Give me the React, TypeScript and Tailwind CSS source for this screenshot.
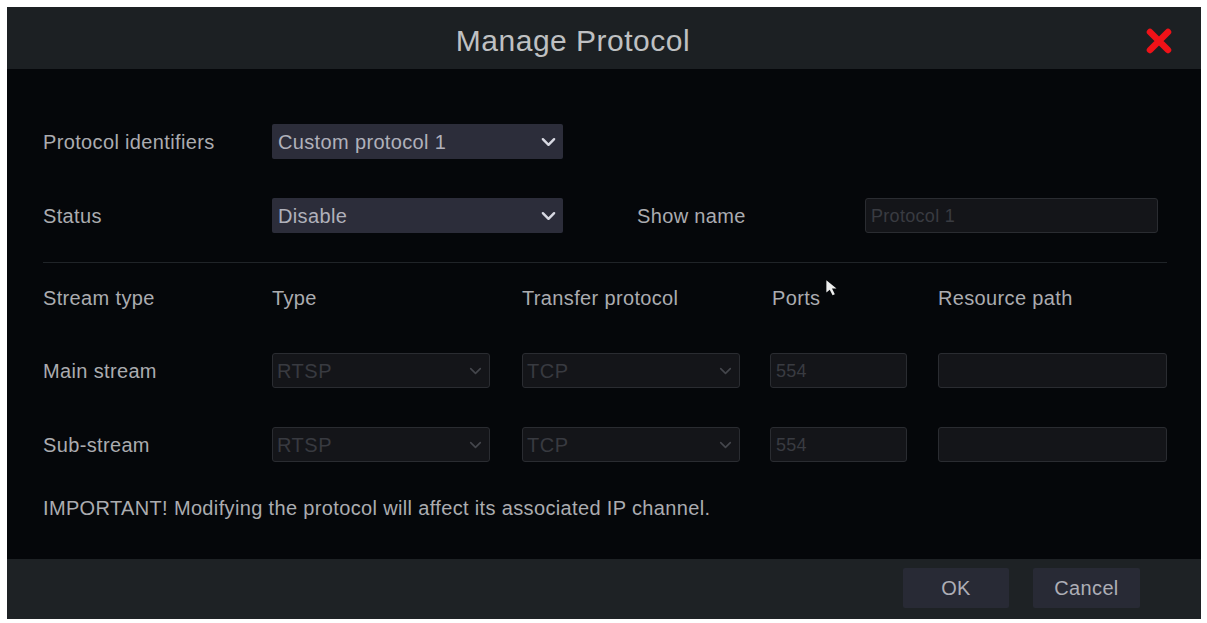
import React from "react";

const Chevron = ({ className, sw }: { className: string; sw: number }) => (
  <svg viewBox="0 0 16 10" className={className} fill="none" stroke="currentColor" strokeWidth={sw} strokeLinecap="round" strokeLinejoin="round">
    <path d="M2 2 L8 8 L14 2" />
  </svg>
);

const EnabledSelect = ({ value }: { value: string }) => (
  <div className="w-[291px] h-[35px] bg-[#2c2d3a] flex items-center justify-between pl-[6px] pr-[7px] rounded-[2px]">
    <span className="text-[20px] tracking-[0.35px] text-[#b0b1bb] leading-none">{value}</span>
    <Chevron className="w-[15px] h-[10px] text-[#d8d9e2]" sw={2.6} />
  </div>
);

const DisabledSelect = ({ value }: { value: string }) => (
  <div className="w-[218px] h-[35px] bg-[#141519] border border-[#2a2c31] rounded-[3px] flex items-center justify-between pl-[4px] pr-[7px]">
    <span className="text-[20px] tracking-[0.5px] text-[#383a40] leading-none">{value}</span>
    <Chevron className="w-[13px] h-[8px] text-[#44464c]" sw={2} />
  </div>
);

const DisabledInput = ({ value, w }: { value: string; w: string }) => (
  <div className={`${w} h-[35px] bg-[#141519] border border-[#2a2c31] rounded-[3px] flex items-center pl-[5px]`}>
    <span className="text-[18px] tracking-[0.3px] text-[#393b41] leading-none">{value}</span>
  </div>
);

export default function App() {
  return (
    <div
      className="min-h-screen bg-white pl-[7px] pt-[7px]"
      style={{ fontFamily: '"Liberation Sans", Arial, sans-serif' }}
    >
      <div className="w-[1194px] h-[612px] flex flex-col">
        {/* Header */}
        <div className="h-[62px] bg-[#1c2023] flex items-center pt-[5px]">
          <div className="flex-1" />
          <span className="text-[30px] tracking-[0.5px] text-[#bfc0c2] leading-none mr-[34px]">Manage Protocol</span>
          <div className="flex-1 flex justify-end pr-[28px]">
            <svg viewBox="0 0 28 28" className="w-[28px] h-[28px]">
              <path d="M5 5 L23 23 M23 5 L5 23" stroke="#ef1218" strokeWidth={6.5} strokeLinecap="round" />
            </svg>
          </div>
        </div>

        {/* Body */}
        <div className="flex-1 bg-[#05070a] pl-[36px] pr-[34px] pt-[55px] relative text-[#abacb0] text-[20px] tracking-[0.35px]">
          <div className="flex items-center h-[35px]">
            <div className="w-[229px] leading-none">Protocol identifiers</div>
            <EnabledSelect value="Custom protocol 1" />
          </div>

          <div className="flex items-center h-[35px] mt-[39px]">
            <div className="w-[229px] leading-none">Status</div>
            <EnabledSelect value="Disable" />
            <div className="ml-[74px] w-[228px] leading-none">Show name</div>
            <DisabledInput value="Protocol 1" w="w-[293px]" />
          </div>

          <div className="mt-[29px] h-px bg-[#202428]" />

          <div className="grid grid-cols-[229px_250px_248px_168px_229px] mt-[23px] h-[24px] items-center leading-[24px]">
            <div>Stream type</div>
            <div>Type</div>
            <div>Transfer protocol</div>
            <div className="pl-[2px]">Ports</div>
            <div>Resource path</div>
          </div>

          <div className="grid grid-cols-[229px_250px_248px_168px_229px] mt-[43px] h-[35px] items-center">
            <div className="leading-none">Main stream</div>
            <DisabledSelect value="RTSP" />
            <DisabledSelect value="TCP" />
            <DisabledInput value="554" w="w-[137px]" />
            <DisabledInput value="" w="w-[229px]" />
          </div>

          <div className="grid grid-cols-[229px_250px_248px_168px_229px] mt-[39px] h-[35px] items-center">
            <div className="leading-none">Sub-stream</div>
            <DisabledSelect value="RTSP" />
            <DisabledSelect value="TCP" />
            <DisabledInput value="554" w="w-[137px]" />
            <DisabledInput value="" w="w-[229px]" />
          </div>

          <div className="mt-[34px] leading-[24px]">
            IMPORTANT! Modifying the protocol will affect its associated IP channel.
          </div>

          {/* mouse cursor */}
          <svg viewBox="0 0 12 16" className="absolute left-[818px] top-[210px] w-[14px] h-[18px]">
            <path d="M1 1 L1 12 L4 9.5 L6.5 14.5 L8.5 13.5 L6 8.5 L10 8.5 Z" fill="#eeeeee" />
          </svg>
        </div>

        {/* Footer */}
        <div className="h-[60px] bg-[#1e2225] flex justify-end items-start pt-[9px] pr-[61px] gap-[24px]">
          <button className="w-[106px] h-[40px] bg-[#282a35] text-[20px] tracking-[0.35px] text-[#adaeb6] rounded-[2px]">OK</button>
          <button className="w-[107px] h-[40px] bg-[#282a35] text-[20px] tracking-[0.35px] text-[#adaeb6] rounded-[2px]">Cancel</button>
        </div>
      </div>
    </div>
  );
}
